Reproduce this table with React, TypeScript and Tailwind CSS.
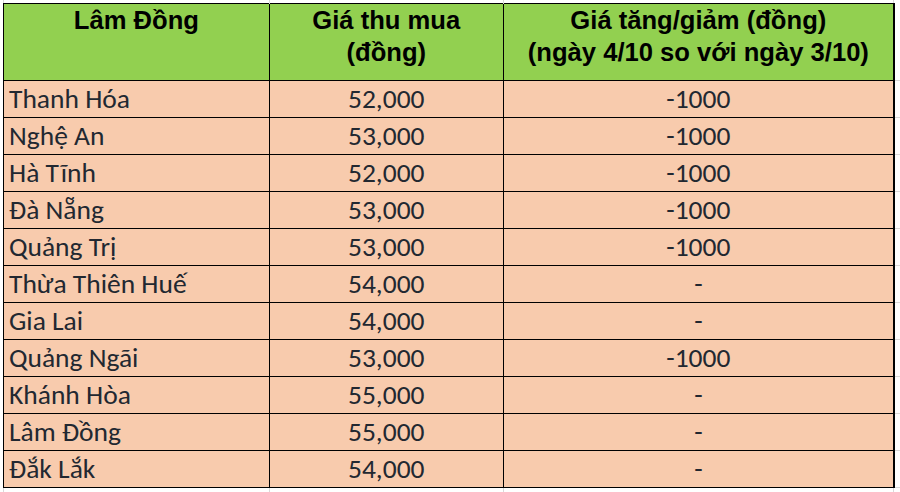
const rows: [string, string, string][] = [
  ["Thanh Hóa", "52,000", "-1000"],
  ["Nghệ An", "53,000", "-1000"],
  ["Hà Tĩnh", "52,000", "-1000"],
  ["Đà Nẵng", "53,000", "-1000"],
  ["Quảng Trị", "53,000", "-1000"],
  ["Thừa Thiên Huế", "54,000", "-"],
  ["Gia Lai", "54,000", "-"],
  ["Quảng Ngãi", "53,000", "-1000"],
  ["Khánh Hòa", "55,000", "-"],
  ["Lâm Đồng", "55,000", "-"],
  ["Đắk Lắk", "54,000", "-"],
];

const grid = "border-r border-[#d9d9d9]";
const body = "border border-black bg-[#f8cbad] h-[37px] align-bottom pb-[4px] leading-[28px]";

export default function App() {
  return (
    <div className="w-[900px] h-[492px] overflow-hidden bg-white pl-[3px]">
      <table className="border-collapse table-fixed border-l border-l-[#d9d9d9]">
        <colgroup>
          <col className="w-[266px]" />
          <col className="w-[234px]" />
          <col className="w-[391px]" />
          <col className="w-[6px]" />
        </colgroup>
        <tbody>
          <tr className="h-[3px]">
            <td className={grid} />
            <td className={grid} />
            <td className={grid} />
            <td />
          </tr>
          <tr className="h-[77px] font-['Liberation_Sans',Arial,sans-serif] font-bold text-[25.6px] leading-[32px] text-black">
            <td className="border border-black bg-[#92d050] text-center align-top">Lâm Đồng</td>
            <td className="border border-black bg-[#92d050] text-center align-top">
              Giá thu mua
              <br />
              (đồng)
            </td>
            <td className="border border-black border-r-2 bg-[#92d050] text-center align-top">
              Giá tăng/giảm (đồng)
              <br />
              (ngày 4/10 so với ngày 3/10)
            </td>
            <td className="border-b border-[#d9d9d9]" />
          </tr>
          {rows.map(([name, price, diff]) => (
            <tr key={name} className="font-['Carlito',Lato,sans-serif] text-[27.5px] text-[#222831]">
              <td className={`${body} pl-[5px] text-left`}>{name}</td>
              <td className={`${body} text-center`}>{price}</td>
              <td className={`${body} border-r-2 text-center`}>{diff}</td>
              <td className="border-b border-[#d9d9d9]" />
            </tr>
          ))}
          <tr className="h-[5px]">
            <td className={grid} />
            <td className={grid} />
            <td className={grid} />
            <td />
          </tr>
        </tbody>
      </table>
    </div>
  );
}
